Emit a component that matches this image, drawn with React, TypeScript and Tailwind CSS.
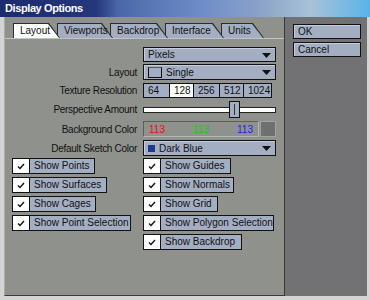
import React from "react";

const TABS = [
  { label: "Layout", w: "w-[47px]", active: true },
  { label: "Viewports", w: "w-[56px]" },
  { label: "Backdrop", w: "w-[58px]" },
  { label: "Interface", w: "w-[59px]" },
  { label: "Units", w: "w-[43px]" },
];

const LEFT_CHECKS = [
  { label: "Show Points", w: "w-[83px]" },
  { label: "Show Surfaces", w: "w-[95px]" },
  { label: "Show Cages", w: "w-[84px]" },
  { label: "Show Point Selection", w: "w-[119px]" },
];

const RIGHT_CHECKS = [
  { label: "Show Guides", w: "w-[88px]" },
  { label: "Show Normals", w: "w-[91px]" },
  { label: "Show Grid", w: "w-[75px]" },
  { label: "Show Polygon Selection", w: "w-[131px]" },
  { label: "Show Backdrop", w: "w-[99px]" },
];

const RES = [
  { v: "64", w: "w-[27px]" },
  { v: "128", w: "w-[25px]", on: true },
  { v: "256", w: "w-[27px]" },
  { v: "512", w: "w-[25px]" },
  { v: "1024", w: "w-[29px]" },
];

function Arrow() {
  return (
    <svg width="9" height="5" viewBox="0 0 9 5" className="absolute right-[4px] top-[5px]">
      <path d="M0 0 H9 L4.5 5 Z" fill="#111" />
    </svg>
  );
}

function Dropdown({ children }: { children: React.ReactNode }) {
  return (
    <div className="relative h-full flex items-center gap-[4px] pl-[4px] border border-[#111] bg-[#a3aec3] shadow-[inset_1px_1px_0_#c6cedb]">
      {children}
      <Arrow />
    </div>
  );
}

function Check({ label, w }: { label: string; w: string }) {
  return (
    <div className={`flex h-[16px] border border-[#111] bg-[#a3aec3] ${w}`}>
      <div className="w-[17px] bg-white border-r border-[#111] flex items-center justify-center">
        <svg width="8" height="7" viewBox="0 0 8 7">
          <path d="M1 3.5 L3 5.5 L7 1" stroke="#111" strokeWidth="1.4" fill="none" />
        </svg>
      </div>
      <span className="pl-[4px] leading-[14px] whitespace-nowrap">{label}</span>
    </div>
  );
}

function Row({ label, h, mt, children }: { label?: string; h: string; mt: string; children: React.ReactNode }) {
  return (
    <div className={`flex items-center ${h} ${mt}`}>
      <div className="w-[132px] text-right whitespace-nowrap tracking-[-0.3px]">{label}</div>
      <div className="ml-[6px] w-[133px] h-full">{children}</div>
    </div>
  );
}

export default function App() {
  return (
    <div className="w-[370px] h-[300px] bg-[#d4d4d4] flex flex-col font-['Liberation_Sans',Arial,sans-serif] text-[10px] text-[#111] overflow-hidden">
      <div className="h-[17px] shrink-0 flex items-center pl-[5px] text-white font-bold text-[11px] tracking-[-0.4px] bg-[linear-gradient(to_right,#1b2c6e_0%,#24377a_26%,#4a68a8_32%,#6f8ec8_55%,#8aa2c8_70%,#a8c2d8_84%,#5ab4e8_100%)]">
        Display Options
      </div>

      <div className="flex-1 flex pl-[4px] pr-[3px] pb-[4px]">
        {/* main panel */}
        <div className="w-[281px] bg-[#8f918c] border-l border-l-[#a9aba7] border-r border-b border-[#3a3b39] flex flex-col">
          <div className="flex h-[15px] mt-[6px] pl-[8px]">
            {TABS.map((t, i) => (
              <div key={t.label} className={`relative h-[15px] ${t.w} ${i > 0 ? "-ml-[3px]" : ""}`} style={{ zIndex: 10 - i }}>
                <div className="absolute inset-0 bg-[#2c2d2b] [clip-path:polygon(0_0,calc(100%_-_11px)_0,100%_100%,0_100%)]" />
                <div
                  className={`absolute left-[1px] top-[1px] right-[1px] bottom-0 [clip-path:polygon(0_0,calc(100%_-_11px)_0,100%_100%,0_100%)] ${
                    t.active ? "bg-white" : "bg-[#a3aec3]"
                  }`}
                />
                <span className="relative block pl-[7px] leading-[15px] whitespace-nowrap">{t.label}</span>
              </div>
            ))}
          </div>
          <div className="h-px bg-[#c2c4bf]" />

          <Row h="h-[15px]" mt="mt-[8px]">
            <Dropdown>
              <span>Pixels</span>
            </Dropdown>
          </Row>
          <Row label="Layout" h="h-[16px]" mt="mt-[2px]">
            <Dropdown>
              <div className="w-[14px] h-[11px] border border-[#111] border-t-[#556] bg-[#a3aec3]" />
              <span>Single</span>
            </Dropdown>
          </Row>
          <Row label="Texture Resolution" h="h-[15px]" mt="mt-[3px]">
            <div className="flex h-full">
              {RES.map((r) => (
                <div
                  key={r.v}
                  className={`${r.w} h-full border border-[#111] -ml-px first:ml-0 pl-[4px] leading-[13px] ${
                    r.on ? "bg-white" : "bg-[#a3aec3]"
                  }`}
                >
                  {r.v}
                </div>
              ))}
            </div>
          </Row>
          <Row label="Perspective Amount" h="h-[17px]" mt="mt-[3px]">
            <div className="relative h-full flex items-center">
              <div className="w-full h-[6px] bg-white border border-[#222]" />
              <div className="absolute left-[86px] top-0 w-[11px] h-[17px] bg-[#a3aec3] border border-[#111] flex justify-center items-center">
                <div className="w-px h-[11px] bg-[#333]" />
              </div>
            </div>
          </Row>
          <Row label="Background Color" h="h-[16px]" mt="mt-[3px]">
            <div className="flex h-full">
              <div className="w-[116px] h-full flex items-center justify-between px-[5px] bg-[#8f918c] border border-t-[#5d5f5b] border-l-[#5d5f5b] border-b-[#b4b6b1] border-r-[#b4b6b1]">
                <span className="text-[#e01414]">113</span>
                <span className="text-[#1fc21f]">113</span>
                <span className="text-[#2222e0]">113</span>
              </div>
              <div className="ml-[1px] w-[16px] h-full bg-[#6e6f71] border border-[#a2a4a0]" />
            </div>
          </Row>
          <Row label="Default Sketch Color" h="h-[16px]" mt="mt-[3px]">
            <Dropdown>
              <div className="w-[7px] h-[7px] bg-[#1f3a8c]" />
              <span>Dark Blue</span>
            </Dropdown>
          </Row>

          <div className="flex mt-[2px] pl-[7px]">
            <div className="w-[131px] flex flex-col gap-[3px]">
              {LEFT_CHECKS.map((c) => (
                <Check key={c.label} {...c} />
              ))}
            </div>
            <div className="flex flex-col gap-[3px]">
              {RIGHT_CHECKS.map((c) => (
                <Check key={c.label} {...c} />
              ))}
            </div>
          </div>
        </div>

        {/* side panel */}
        <div className="flex-1 bg-[#727274] pt-[7px] pl-[8px] flex flex-col gap-[3px]">
          {["OK", "Cancel"].map((b) => (
            <div
              key={b}
              className="w-[68px] h-[15px] border border-[#111] bg-[#a3aec3] shadow-[inset_1px_1px_0_#c6cedb] pl-[4px] leading-[13px]"
            >
              {b}
            </div>
          ))}
        </div>
      </div>
    </div>
  );
}
